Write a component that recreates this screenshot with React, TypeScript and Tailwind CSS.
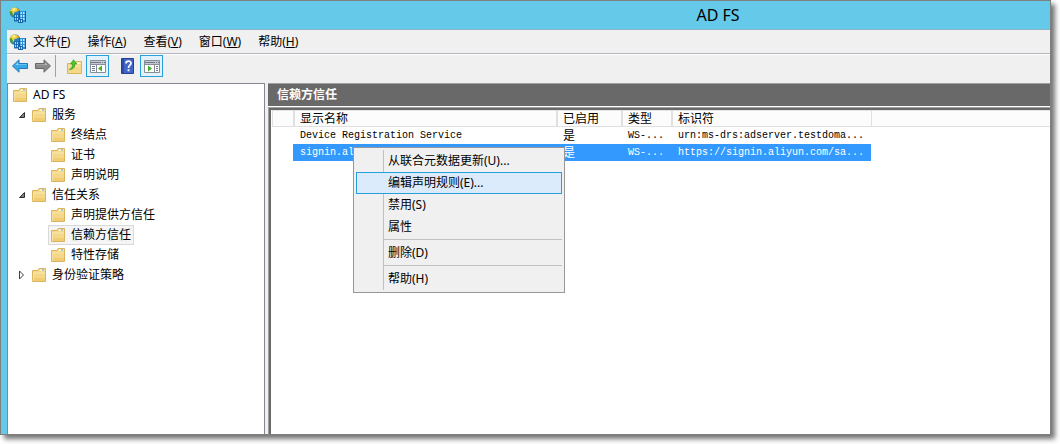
import type { ReactNode } from 'react';
import clsx from 'clsx';

type TreeItem = {
  label: string;
  level: 0 | 1 | 2;
  state?: 'open' | 'closed';
  selected?: boolean;
};

const menus = [
  { label: '文件', accessKey: 'F' },
  { label: '操作', accessKey: 'A' },
  { label: '查看', accessKey: 'V' },
  { label: '窗口', accessKey: 'W' },
  { label: '帮助', accessKey: 'H' },
];

const treeItems: TreeItem[] = [
  { label: 'AD FS', level: 0 },
  { label: '服务', level: 1, state: 'open' },
  { label: '终结点', level: 2 },
  { label: '证书', level: 2 },
  { label: '声明说明', level: 2 },
  { label: '信任关系', level: 1, state: 'open' },
  { label: '声明提供方信任', level: 2 },
  { label: '信赖方信任', level: 2, selected: true },
  { label: '特性存储', level: 2 },
  { label: '身份验证策略', level: 1, state: 'closed' },
];

const columns = ['显示名称', '已启用', '类型', '标识符'];

const trusts = [
  {
    name: 'Device Registration Service',
    enabled: '是',
    type: 'WS-...',
    identifier: 'urn:ms-drs:adserver.testdoma...',
  },
  {
    name: 'signin.aliyun.com',
    enabled: '是',
    type: 'WS-...',
    identifier: 'https://signin.aliyun.com/sa...',
    selected: true,
  },
];

const contextGroups = [
  ['从联合元数据更新(U)...', '编辑声明规则(E)...', '禁用(S)', '属性'],
  ['删除(D)'],
  ['帮助(H)'],
];

function AppIcon() {
  return (
    <svg width="17" height="16" viewBox="0 0 17 16" className="shrink-0">
      <circle cx="6" cy="5.500" r="5.300" fill="#2383c4" />
      <path d="M1 5C1 2 3.500 .3 6.500 .3L10 2.500 8 4.500 5.500 5 4.500 8 2.500 7.500Z" fill="#f0d33c" />
      <path d="M3.500 1.500 6 1 6.500 3 4 4Z" fill="#fdf0a0" />
      <path d="M.8 4.500 2.500 4 4 7 3.500 9.500 1.500 8Z" fill="#4f9a35" />
      <path d="M8 1 10.500 3 10 4 8 3.500Z" fill="#e09a2a" />
      <path d="M10 4H16.500V15H10Z" fill="#2d8fdb" />
      <path d="M10 4H11V15H10ZM16 4H17V15H16Z" fill="#1460a5" />
      <path d="M11.500 5H13V7H11.500ZM14 5H15.500V7H14ZM11.500 8H13V10H11.500ZM14 8H15.500V10H14ZM11.500 11H13V13H11.500ZM14 11H15.500V13H14Z" fill="#c4e9fd" />
      <path d="M5 7H10V14.500H5Z" fill="#1b6cb5" />
      <path d="M6 8H7V10H6ZM8 8H9V10H8ZM6 11H7V13H6ZM8 11H9V13H8Z" fill="#a5dcf8" />
      <path d="M9 12H14V16H9Z" fill="#1c63a6" />
      <path d="M10 13H11V15H10ZM12 13H13V15H12Z" fill="#bfe5fb" />
    </svg>
  );
}

function FolderIcon() {
  return (
    <svg width="14" height="14" viewBox="0 0 14 14" className="shrink-0">
      <path d="M.5 2.500H6L7 .5H13.500V13.500H.5Z" fill="#f4d888" stroke="#d9b560" />
      <path d="M8 1.500H12.500V3H7.500Z" fill="#fff7dc" />
      <path d="M10 1.500H12V2.500H10Z" fill="#5b9bd5" />
      <path d="M1 4.500H13V5.500H1Z" fill="#fbe9b2" />
      <path d="M1 5.500H2V13H1Z" fill="#fae3a0" />
      <path d="M2 10H13V13H2Z" fill="#edc666" opacity=".6" />
    </svg>
  );
}

function ArrowIcon({ forward = false }: { forward?: boolean }) {
  return (
    <svg width="16" height="14" viewBox="0 0 16 14">
      {forward ? (
        <>
          <path d="M15.500 7 9 .8V4.500H.5V9.500H9V13.200Z" fill="#8b8b8b" stroke="#696969" />
          <path d="M10 3.500 12.500 6H1.500V5.500H10Z" fill="#bababa" />
        </>
      ) : (
        <>
          <path d="M.5 7 7 .8V4.500H15.500V9.500H7V13.200Z" fill="#38a8e6" stroke="#2478b8" />
          <path d="M6 3.500 3.500 6H14.500V5.500H6Z" fill="#9cdcf9" />
        </>
      )}
    </svg>
  );
}

function UpFolderIcon() {
  return (
    <svg width="15" height="15" viewBox="0 0 15 15">
      <path d="M.5 4.500H8L9 2.500H14.500V14.500H.5Z" fill="#f4d888" stroke="#d9b560" />
      <path d="M10 3.500H13.500V5H9.500Z" fill="#fff7dc" />
      <path d="M1 6.500H14V7.500H1Z" fill="#fbe9b2" />
      <path d="M2.500 10.500C5 9.500 5.500 7.500 5.500 5H3.500L6.500 .8 9.800 5H7.800C8 8 6.500 10.500 2.500 10.500Z" fill="#4cc82c" stroke="#2f9a1c" strokeWidth=".7" />
    </svg>
  );
}

// side: which edge of the little window holds the extra pane
function PaneIcon({ side }: { side: 'left' | 'right' }) {
  return (
    <svg width="16" height="13" viewBox="0 0 16 13">
      <path d="M.5 .5H15.500V12.500H.5Z" fill="#fff" stroke="#878d99" />
      <path d="M1 1H15V4H1Z" fill="#c5cad3" />
      <path d="M1 2H11V3H1ZM12 2H13V3H12ZM14 2H15V3H14Z" fill="#70798a" />
      <path d="M1 4H15V5H1Z" fill="#878d99" />
      {side === 'left' ? (
        <>
          <path d="M6 5H7V12H6Z" fill="#878d99" />
          <path d="M2 6H5V7H2ZM2 8H5V9H2ZM2 10H5V11H2Z" fill="#6a7c9c" />
          <path d="M12 5.500V11.500L8 8.500Z" fill="#46ad27" />
        </>
      ) : (
        <>
          <path d="M10 5H11V12H10Z" fill="#878d99" />
          <path d="M12 6H14V7H12ZM12 8H14V9H12ZM12 10H14V11H12Z" fill="#6a7c9c" />
          <path d="M4 5.500V11.500L8 8.500Z" fill="#46ad27" />
        </>
      )}
    </svg>
  );
}

function HelpIcon() {
  return (
    <svg width="13" height="16" viewBox="0 0 13 16">
      <path d="M.5 .5H12.500V15.500H.5Z" fill="#4166c8" stroke="#263e94" />
      <path d="M1 1H3V15H1Z" fill="#2f4ca9" />
      <path d="M5 5.500C5 2.300 10 2.300 10 5.300 10 7.200 7.500 7.300 7.500 10" fill="none" stroke="#fff" strokeWidth="1.700" />
      <path d="M6.600 11.300H8.500V13.200H6.600Z" fill="#fff" />
    </svg>
  );
}

function Expander({ state }: { state: 'open' | 'closed' }) {
  return (
    <svg width="8" height="10" viewBox="0 0 8 10" className="shrink-0">
      {state === 'open' ? (
        <path d="M6.500 2.500V7.500H1.500Z" fill="#808080" stroke="#303030" />
      ) : (
        <path d="M1.500 1 5.500 5 1.500 9Z" fill="#fff" stroke="#404040" />
      )}
    </svg>
  );
}

function ToolButton({ label, active, children }: { label: string; active?: boolean; children: ReactNode }) {
  return (
    <button
      type="button"
      aria-label={label}
      className={clsx(
        'flex h-[22px] items-center justify-center',
        active && 'w-[23px] border border-[#26a0da] bg-[#e3f1fa]',
      )}
    >
      {children}
    </button>
  );
}

function Toolbar() {
  return (
    <div className="flex h-[29px] shrink-0 items-start border-t border-white pl-[5px]">
      <div className="flex gap-[7px]">
        <ToolButton label="后退">
          <ArrowIcon />
        </ToolButton>
        <ToolButton label="前进">
          <ArrowIcon forward />
        </ToolButton>
      </div>
      <div className="ml-1 h-[22px] w-px bg-[#a0a0a0]" />
      <div className="ml-[11px] flex gap-1">
        <ToolButton label="上移一级">
          <UpFolderIcon />
        </ToolButton>
        <ToolButton label="显示/隐藏控制台树" active>
          <PaneIcon side="left" />
        </ToolButton>
      </div>
      <div className="ml-3 flex gap-[6px]">
        <ToolButton label="帮助">
          <HelpIcon />
        </ToolButton>
        <ToolButton label="显示/隐藏操作窗格" active>
          <PaneIcon side="right" />
        </ToolButton>
      </div>
    </div>
  );
}

function Tree() {
  return (
    <ul className="w-[258px] shrink-0 border-x border-t border-[#828790] bg-white pt-px">
      {treeItems.map(({ label, level, state, selected }) => (
        <li
          key={label}
          className={clsx('flex h-5 items-center', {
            'pl-[2px]': level === 0,
            'pl-[10px]': level === 1,
            'pl-10': level === 2,
          })}
        >
          {state && <Expander state={state} />}
          <button
            type="button"
            className={clsx(
              'flex h-5 items-center gap-[6px] border px-[2px] whitespace-nowrap',
              level === 1 && 'ml-[3px]',
              selected ? 'border-[#d9d9d9] bg-[#f5f5f5]' : 'border-transparent',
            )}
          >
            <FolderIcon />
            {label}
          </button>
        </li>
      ))}
    </ul>
  );
}

function ContextMenu() {
  return (
    <div
      role="menu"
      className="absolute top-[3px] left-[60px] z-10 w-[212px] border border-[#979797] bg-[#f0f0f0] p-[2px] font-['Noto_Sans','Noto_Sans_CJK_SC',sans-serif] text-black"
    >
      {contextGroups.map((group, index) => (
        <div key={group[0]}>
          {index > 0 && (
            <div className="ml-[27px] border-l border-[#c0c0c0] pt-px pb-[2px]">
              <div className="h-px bg-[#c0c0c0]" />
            </div>
          )}
          {group.map((label) => {
            const active = label.startsWith('编辑');
            return (
              <button
                key={label}
                type="button"
                role="menuitem"
                className={clsx(
                  'flex h-[22px] w-full items-center border text-left',
                  active ? 'border-[#26a0da] bg-[#dcebfc] pl-[31px]' : 'border-transparent pl-[26px]',
                )}
              >
                {active ? (
                  label
                ) : (
                  <span className="-my-px flex h-[22px] items-center border-l border-[#c0c0c0] pl-1">{label}</span>
                )}
              </button>
            );
          })}
        </div>
      ))}
    </div>
  );
}

function TrustTable() {
  return (
    <table className="w-full table-fixed border-collapse text-left leading-4">
      <colgroup>
        <col className="w-[21px]" />
        <col className="w-[263px]" />
        <col className="w-[65px]" />
        <col className="w-[50px]" />
        <col className="w-[200px]" />
        <col />
      </colgroup>
      <thead>
        <tr className="h-[17px] bg-[#fcfcfc] shadow-[inset_0_1px_#e5e5e5,inset_0_-1px_#e0e0e0]">
          <td className="p-0">
            <div className="h-[17px] w-px bg-[#e0e0e0]" />
          </td>
          {columns.map((column) => (
            <th key={column} scope="col" className="p-0 font-normal">
              <div className="h-[17px] border-l-2 border-[#e0e0e0] pt-px pl-[5px]">{column}</div>
            </th>
          ))}
          <td className="p-0">
            <div className="h-[17px] w-px bg-[#e0e0e0]" />
          </td>
        </tr>
      </thead>
      <tbody>
        {trusts.map(({ name, enabled, type, identifier, selected }) => {
          const cell = clsx('p-0 pl-[7px] whitespace-nowrap', selected && 'bg-[#3399ff] text-white');
          const mono = "font-['Liberation_Mono',monospace] text-[10px]";
          return (
            <tr key={name} className="h-[17px]">
              <td className="p-0" />
              <td className={clsx(cell, mono, selected && 'relative')}>
                {name}
                {selected && (
                  <div className="text-xs">
                    <ContextMenu />
                  </div>
                )}
              </td>
              <td className={cell}>{enabled}</td>
              <td className={clsx(cell, mono)}>{type}</td>
              <td className={clsx(cell, mono)}>{identifier}</td>
              <td className="p-0" />
            </tr>
          );
        })}
      </tbody>
    </table>
  );
}

export default function App() {
  return (
    <div className="flex min-h-screen bg-white pr-[9px] pb-[9px] font-['Noto_Sans','Noto_Sans_CJK_SC',sans-serif] text-xs leading-4 text-black">
      <div className="flex min-w-0 flex-1 flex-col border border-[#7f7f7f] bg-[#65c9ea] shadow-[4px_4px_5px_rgba(0,0,0,0.55)]">
        <header className="flex h-7 shrink-0 items-center pl-2">
          <AppIcon />
          <h1 className="flex-1 pl-[360px] text-center text-base leading-7">AD FS</h1>
        </header>
        <div className="ml-[6px] flex flex-1 flex-col border-t border-[#8db5c8] bg-[#f0f0f0]">
          <nav className="flex h-6 shrink-0 items-center border-b border-[#b0b4bc] pl-[2px]">
            <AppIcon />
            <div className="ml-[7px] flex gap-[17px]">
              {menus.map(({ label, accessKey }) => (
                <button key={accessKey} type="button" className="whitespace-nowrap">
                  {label}(<u>{accessKey}</u>)
                </button>
              ))}
            </div>
          </nav>
          <Toolbar />
          <div className="flex flex-1">
            <Tree />
            <main className="ml-[3px] flex min-w-0 flex-1 flex-col">
              <h2 className="h-6 shrink-0 border-t border-b border-t-[#a0a0a0] border-b-white bg-[#696969] pl-[9px] text-xs leading-[22px] font-bold text-white">
                信赖方信任
              </h2>
              <div className="flex flex-1 border-t border-l border-[#a0a0a0]">
                <div className="min-w-0 flex-1 border-t-2 border-l-2 border-[#696969] bg-white pl-px">
                  <TrustTable />
                </div>
              </div>
            </main>
          </div>
        </div>
      </div>
    </div>
  );
}
